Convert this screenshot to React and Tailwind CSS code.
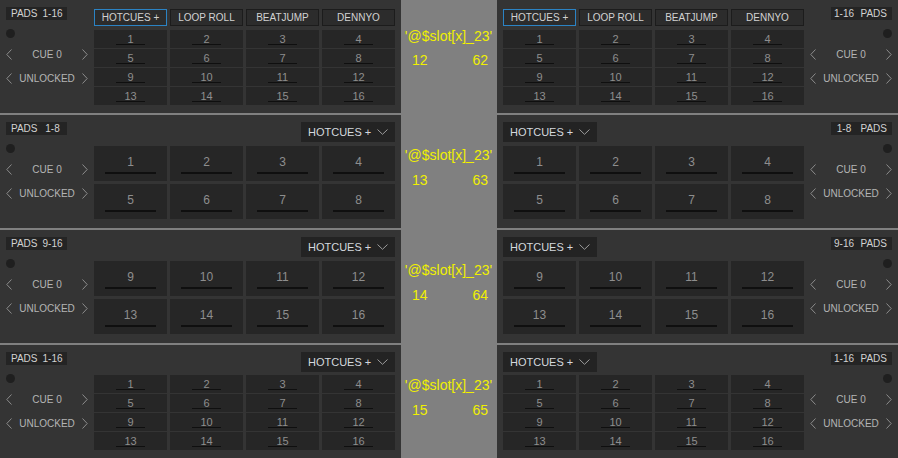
import React from 'react';

const rows = [
  { range: '1-16', header: 'tabs', pads: 16, start: 1, a: 12, b: 62 },
  { range: '1-8', header: 'menu', pads: 8, start: 1, a: 13, b: 63 },
  { range: '9-16', header: 'menu', pads: 8, start: 9, a: 14, b: 64 },
  { range: '1-16', header: 'menu', pads: 16, start: 1, a: 15, b: 65 },
];

const tabs = ['HOTCUES +', 'LOOP ROLL', 'BEATJUMP', 'DENNYO'];

function Chevron({ dir }) {
  return (
    <svg width="6" height="11" viewBox="0 0 6 11" className="shrink-0">
      <polyline
        points={dir === 'left' ? '5.5,0.5 0.8,5.5 5.5,10.5' : '0.5,0.5 5.2,5.5 0.5,10.5'}
        fill="none"
        stroke="#8c8c8c"
        strokeWidth="1"
      />
    </svg>
  );
}

function SideCol({ range, right }) {
  return (
    <div className="w-[94px] shrink-0 flex flex-col pt-[7px]">
      {right ? (
        <div className="self-end mr-[6px] w-[61px] h-[13px] flex justify-between items-center bg-[#242424] text-[10px] leading-[13px] text-[#d2d2d2]">
          <span className="w-[24px] ml-[1px] text-center">{range}</span>
          <span className="pr-[5px]">PADS</span>
        </div>
      ) : (
        <div className="ml-[6px] w-[61px] h-[13px] flex items-center bg-[#242424] text-[10px] leading-[13px] text-[#d2d2d2] pl-[5px]">
          <span>PADS</span>
          <span className="w-[24px] ml-[3px] text-center">{range}</span>
        </div>
      )}
      <div className={`mt-[9px] w-[9px] h-[9px] rounded-full bg-[#1f1f1f] ${right ? 'self-end mr-[6px]' : 'ml-[6px]'}`} />
      <div className="mt-[8px] h-[16px] px-[6px] flex items-center text-[10px] text-[#b4b4b4]">
        <Chevron dir="left" />
        <span className="flex-1 text-center">CUE 0</span>
        <Chevron dir="right" />
      </div>
      <div className="mt-[8px] h-[16px] px-[6px] flex items-center text-[10px] text-[#b4b4b4]">
        <Chevron dir="left" />
        <span className="flex-1 text-center">UNLOCKED</span>
        <Chevron dir="right" />
      </div>
    </div>
  );
}

function Grid16({ className }) {
  return (
    <div className={`grid grid-cols-4 grid-rows-4 gap-x-[3px] gap-y-[1px] h-[75px] ${className}`}>
      {Array.from({ length: 16 }, (_, i) => (
        <div key={i} className="bg-[#262626] flex flex-col items-center pt-[3px]">
          <span className="text-[11px] leading-[12px] text-[#8e8e8e]">{i + 1}</span>
          <div className="w-[29px] h-[1px] bg-[#0f0f0f] -mt-[1px]" />
        </div>
      ))}
    </div>
  );
}

function Grid8({ start, className }) {
  return (
    <div className={`grid grid-cols-4 grid-rows-2 gap-[3px] h-[73px] ${className}`}>
      {Array.from({ length: 8 }, (_, i) => (
        <div key={i} className="bg-[#262626] flex flex-col items-center pt-[10px]">
          <span className="text-[12px] leading-[13px] text-[#8e8e8e]">{start + i}</span>
          <div className="w-[51px] h-[2px] bg-[#0f0f0f] mt-[3px]" />
        </div>
      ))}
    </div>
  );
}

function Dropdown({ right }) {
  return (
    <div className={`mt-[7px] w-[94px] h-[20px] bg-[#232323] flex items-center pl-[7px] pr-[7px] justify-between ${right ? 'self-start' : 'self-end'}`}>
      <span className="text-[11px] leading-[20px] text-[#d4d9de]">HOTCUES +</span>
      <svg width="11" height="6" viewBox="0 0 11 6">
        <polyline points="0.5,0.5 5.5,5.3 10.5,0.5" fill="none" stroke="#9c9c9c" strokeWidth="1" />
      </svg>
    </div>
  );
}

function PadArea({ row, right }) {
  return (
    <div className="w-[301px] shrink-0 flex flex-col">
      {row.header === 'tabs' ? (
        <div className="mt-[9px] grid grid-cols-4 gap-x-[3px] h-[17px]">
          {tabs.map((t, i) => (
            <div
              key={t}
              className={`flex items-center justify-center bg-[#2c2c2c] border text-[10px] text-[#d2d2d2] ${i === 0 ? 'border-[#2b83c4]' : 'border-[#1c1c1c]'}`}
            >
              {t}
            </div>
          ))}
        </div>
      ) : (
        <Dropdown right={right} />
      )}
      {row.pads === 16 ? (
        <Grid16 className={row.header === 'tabs' ? 'mt-[4px]' : 'mt-[3px]'} />
      ) : (
        <Grid8 start={row.start} className="mt-[4px]" />
      )}
    </div>
  );
}

function Row({ row, idx }) {
  return (
    <div className="flex h-[113px]">
      <div className="w-[401px] shrink-0 bg-[#343434] flex">
        <SideCol range={row.range} />
        <PadArea row={row} />
      </div>
      <div className={`w-[96px] shrink-0 flex flex-col text-[14px] leading-[16px] text-[#f0f000] ${idx === 0 ? 'pt-[28px]' : 'pt-[32px]'}`}>
        <div className="text-center pr-[1px]">'@$slot[x]_23'</div>
        <div className={`flex justify-between pl-[11px] pr-[9px] ${idx === 0 ? 'mt-[8px]' : 'mt-[9px]'}`}>
          <span>{row.a}</span>
          <span>{row.b}</span>
        </div>
      </div>
      <div className="w-[401px] shrink-0 bg-[#343434] flex pl-[6px]">
        <PadArea row={row} right />
        <SideCol range={row.range} right />
      </div>
    </div>
  );
}

export default function App() {
  return (
    <div className="w-[898px] h-[458px] bg-[#808080] flex flex-col gap-[2px] overflow-hidden font-['Liberation_Sans',Arial,sans-serif]">
      {rows.map((r, i) => (
        <Row key={i} row={r} idx={i} />
      ))}
    </div>
  );
}
